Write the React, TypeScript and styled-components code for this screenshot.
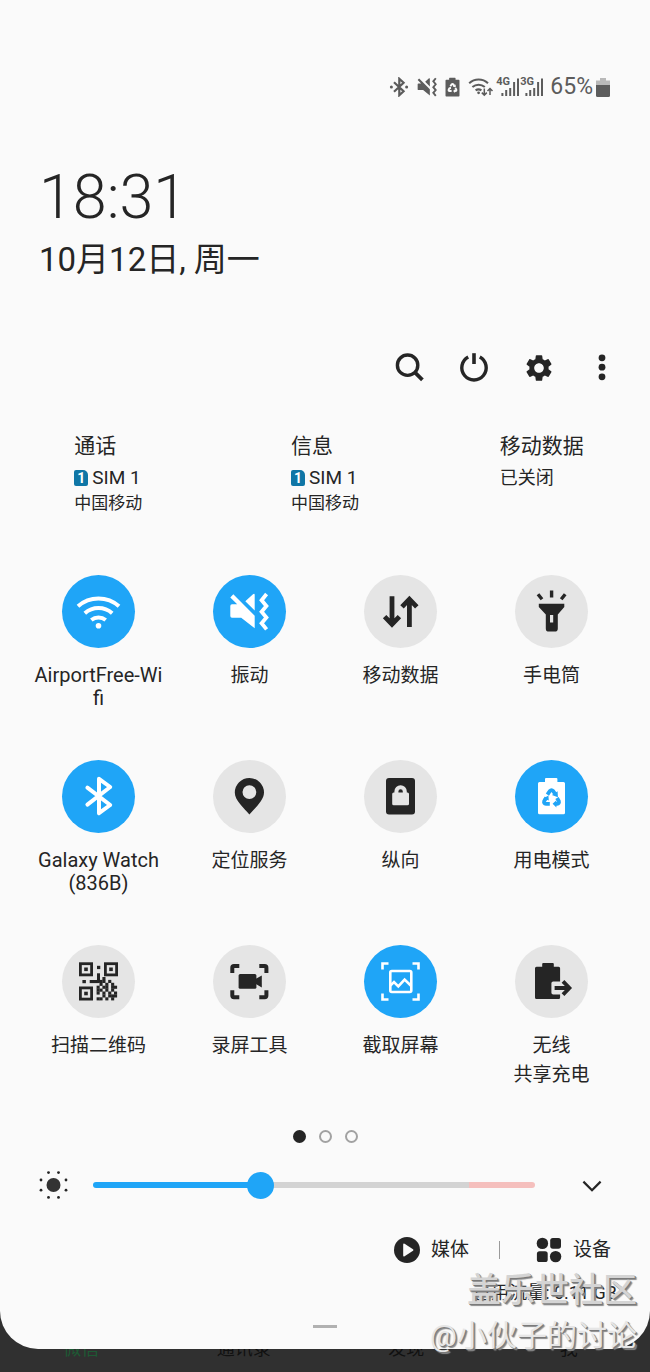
import React, { useState } from "react";
import styled, { createGlobalStyle } from "styled-components";
import { MdSettings } from "react-icons/md";

const ink = "#252525";
const blue = "#1fa5f7";
const grey = "#e5e5e5";
const paper = "#fafafa";
const statusInk = "#5c5c5c";

const GlobalStyle = createGlobalStyle`
  *, *::before, *::after { box-sizing: border-box; }
  body {
    margin: 0;
    background: #303030;
    color: ${ink};
    font-family: Roboto, "Noto Sans CJK SC", sans-serif;
  }
  button { font: inherit; color: inherit; background: none; border: 0; padding: 0; cursor: pointer; }
  svg { display: block; flex: none; }
`;

const Screen = styled.div`
  position: relative;
  overflow: hidden;
  min-height: 100vh;
`;

const Panel = styled.main`
  position: relative;
  z-index: 1;
  background: ${paper};
  border-radius: 0 0 38px 38px;
  padding-top: 72px;
`;

const StatusBar = styled.header`
  display: flex;
  justify-content: flex-end;
  align-items: center;
  gap: 8px;
  height: 30px;
  padding: 0 40px;
  color: ${statusInk};
`;

const SignalPair = styled.div`
  display: flex;
  gap: 1px;
  margin-left: -5px;
`;

const SignalBox = styled.div`
  position: relative;
  width: 23px;
  height: 20px;
`;

const SignalLabel = styled.span`
  position: absolute;
  left: -1px;
  top: -1px;
  font-size: 11px;
  line-height: 12px;
  font-weight: 700;
`;

const Charge = styled.div`
  display: flex;
  align-items: center;
  gap: 3px;
  font-size: 23px;
  line-height: 30px;
  margin-left: -2px;
`;

const ClockBlock = styled.section`
  padding: 57px 39px 0;
`;

const Clock = styled.div`
  font-size: 61px;
  line-height: 76px;
  font-weight: 300;
`;

const DateLine = styled.div`
  font-size: 33px;
  line-height: 50px;
`;

const Toolbar = styled.div`
  display: flex;
  justify-content: flex-end;
  gap: 34px;
  padding: 67px 33px 0;
`;

const ToolButton = styled.button`
  display: grid;
  place-items: center;
  width: 30px;
  height: 30px;
`;

const SimRow = styled.section`
  display: grid;
  grid-template-columns: repeat(3, 1fr);
  justify-items: center;
  padding-top: 48px;
  height: 193px;
`;

const SimTitle = styled.h2`
  margin: 0;
  font-size: 21px;
  line-height: 32px;
  font-weight: 400;
`;

const SimName = styled.div<{ $latin?: boolean }>`
  display: flex;
  align-items: center;
  gap: 4px;
  font-size: ${(p) => (p.$latin ? 19 : 18)}px;
  line-height: 32px;
`;

const SimBadge = styled.span`
  width: 14px;
  height: 16px;
  border-radius: 2px 5px 2px 2px;
  background: #0f76a6;
  color: #fff;
  font-size: 14px;
  line-height: 16px;
  font-weight: 700;
  text-align: center;
`;

const SimCarrier = styled.div`
  font-size: 17px;
  line-height: 18px;
`;

const Tiles = styled.section`
  display: grid;
  grid-template-columns: repeat(4, 1fr);
  grid-auto-rows: minmax(185px, auto);
  padding: 0 23px;
`;

const TileButton = styled.button`
  display: flex;
  flex-direction: column;
  align-items: center;
  gap: 13px;
`;

const Disc = styled.span<{ $on: boolean }>`
  display: block;
  width: 73px;
  height: 73px;
  border-radius: 50%;
  background: ${(p) => (p.$on ? blue : grey)};
  color: ${(p) => (p.$on ? "#fff" : ink)};
`;

const TileLabel = styled.span<{ $latin: boolean }>`
  font-size: ${(p) => (p.$latin ? 20 : 19)}px;
  line-height: ${(p) => (p.$latin ? 23 : 29)}px;
  white-space: pre-line;
  padding-top: ${(p) => (p.$latin ? 3 : 0)}px;
`;

const Pager = styled.nav`
  display: flex;
  justify-content: center;
  gap: 13px;
`;

const PageDot = styled.button<{ $current: boolean }>`
  width: 13px;
  height: 13px;
  border-radius: 50%;
  border: 2px solid ${(p) => (p.$current ? ink : "#a2a2a2")};
  background: ${(p) => (p.$current ? ink : "transparent")};
`;

const BrightnessRow = styled.div`
  display: flex;
  align-items: center;
  padding: 0 43px 0 38px;
  margin-top: 27px;
`;

const Slider = styled.input`
  flex: 1;
  min-width: 0;
  height: 30px;
  margin: 0 42px 0 24px;
  appearance: none;
  background: transparent;

  &::-webkit-slider-runnable-track {
    height: 6px;
    border-radius: 3px;
    background: linear-gradient(
      to right,
      ${blue} var(--level),
      #d3d3d3 var(--level),
      #d3d3d3 85%,
      #f5bfbd 85%
    );
  }
  &::-webkit-slider-thumb {
    appearance: none;
    width: 27px;
    height: 27px;
    margin-top: -10px;
    border-radius: 50%;
    background: ${blue};
  }
`;

const Footer = styled.div`
  display: flex;
  align-items: center;
  justify-content: flex-end;
  padding: 0 39px;
  margin-top: 35px;
  font-size: 19px;
  line-height: 30px;
`;

const FooterButton = styled.button`
  display: flex;
  align-items: center;
  gap: 11px;
`;

const Divider = styled.span`
  width: 1px;
  height: 18px;
  margin: 0 36px 0 30px;
  background: #9a9a9a;
`;

const Usage = styled.div`
  padding: 15px 33px 0;
  text-align: right;
  font-size: 18px;
  line-height: 26px;
`;

const Handle = styled.div`
  width: 24px;
  height: 3px;
  margin: 19px auto 0;
  background: #b1b1b1;
`;

const PanelEnd = styled.div`
  height: 21px;
`;

const TabBar = styled.nav`
  display: grid;
  grid-template-columns: repeat(4, 1fr);
  margin-top: -13px;
  padding-bottom: 10px;
  font-size: 18px;
  line-height: 26px;
  text-align: center;
`;

const Tab = styled.a<{ $active: boolean }>`
  color: ${(p) => (p.$active ? "#1d5a34" : "#111")};
  text-decoration: none;
`;

const Watermark = styled.div`
  position: absolute;
  z-index: 2;
  right: 13px;
  bottom: 14px;
  text-align: right;
  color: #d4d4d4;
  text-shadow: 1px 1px 0 #7a7a7a, 2px 2px 1px #8a8a8a;
  pointer-events: none;
`;

const WatermarkTitle = styled.div`
  font-size: 34px;
  line-height: 48px;
  font-weight: 500;
`;

const WatermarkUser = styled.div`
  font-size: 30px;
  line-height: 44px;
  color: #e6e6e6;
`;

type IconProps = { children: React.ReactNode; box?: string; w?: number; h?: number };

const Icon = ({ children, box = "0 0 73 73", w = 73, h = 73 }: IconProps) => (
  <svg width={w} height={h} viewBox={box} fill="none" stroke="none" aria-hidden="true">
    {children}
  </svg>
);

const WifiShape = () => (
  <>
    <g stroke="currentColor" strokeWidth="4">
      <path d="M16 31.3A31 31 0 0 1 57 31.3" />
      <path d="M22.8 38.2A21 21 0 0 1 50.2 38.2" />
      <path d="M29.3 45A11.5 11.5 0 0 1 43.7 45" />
    </g>
    <circle cx="36.5" cy="50.8" r="2.8" fill="currentColor" />
  </>
);

const VibrateShape = () => (
  <>
    <path
      fill="currentColor"
      d="M17.3 31Q17.3 29.3 19 29.3H24.2L17.3 22.4 20.3 19.3 41.7 40.8V53.3L28.2 42.7H19Q17.3 42.7 17.3 41ZM32.3 26.2 40 19.2Q41.7 18 41.7 20V35.4Z"
    />
    <path
      stroke="currentColor"
      strokeWidth="3.8"
      d="M53.6 19 48.6 25.2 53.4 31 48.6 36.8 53.4 42.6 48.6 48.2 53.6 54.4"
    />
  </>
);

const DataShape = () => (
  <path
    stroke="currentColor"
    strokeWidth="4.8"
    d="M28 21.3V49M20.6 41.6 28 49.2 35.4 41.6M45.4 52V24.2M38 31.9 45.4 24.2 52.8 31.9"
  />
);

const TorchShape = () => (
  <>
    <path
      fill="currentColor"
      fillRule="evenodd"
      d="M23.8 28.7H49.3V32L42.8 39.5V53.4Q42.8 56.6 39.6 56.6H34Q30.8 56.6 30.8 53.4V39.5L23.8 32ZM35 40V47.6H38.2V40Z"
    />
    <path stroke="currentColor" strokeWidth="3.4" d="M36.6 15.6V22.4M23 19.3 27 24.3M50.2 19.3 46.2 24.3" />
  </>
);

const BluetoothShape = () => (
  <path
    stroke="currentColor"
    strokeWidth="4"
    strokeLinecap="round"
    strokeLinejoin="round"
    d="M25.4 27.6 48.2 45 37 53.2V18.8L48.2 27 25.4 44.6"
  />
);

const PinShape = () => (
  <path
    fill="currentColor"
    fillRule="evenodd"
    d="M36.4 54.5C31 48 21.8 40.5 21.8 32.5A14.6 14.6 0 0 1 51 32.5C51 40.5 41.8 48 36.4 54.5ZM36.4 25.2A6.9 6.9 0 1 0 36.4 39 6.9 6.9 0 1 0 36.4 25.2Z"
  />
);

const PortraitShape = () => (
  <>
    <rect x="22" y="18" width="29" height="36.4" rx="3" fill="currentColor" />
    <rect x="28.2" y="32.4" width="16.8" height="12.8" rx="1.5" fill={grey} />
    <path stroke={grey} strokeWidth="4" d="M32.4 34V31.4A4.2 4.2 0 0 1 40.8 31.4V34" />
  </>
);

const PowerModeShape = ({ cut }: { cut: string }) => (
  <>
    <path
      fill="currentColor"
      d="M30 22V19Q30 18 31 18H41.4Q42.4 18 42.4 19V22H48.5Q50 22 50 23.5V52.8Q50 54.3 48.5 54.3H24.5Q23 54.3 23 52.8V23.5Q23 22 24.5 22Z"
    />
    <path
      stroke={cut}
      strokeWidth="3.8"
      d="M32.4 34.6 34.9 31Q36.5 29.2 38.1 31L40 33.8M31.4 37.6 29.2 41Q28.4 43.6 31 43.8H34.8M42 38 43.8 41Q44.6 43.6 42 43.8H40.5"
    />
    <path fill={cut} d="M36.9 34.9 42.6 31.2 42.9 37.2ZM28.2 38.4 33.4 35.4 33.8 40.4ZM41.4 40.2V47.4L37.6 43.8Z" />
  </>
);

const qrRows = [
  "..#....",
  "###.#..",
  ".#.#.#.",
  "#.##.##",
  "##.#.#.",
  "#.#.#.#",
  "..#.###",
  "##.#.#.",
];

const QrShape = () => (
  <g fill="currentColor">
    {[
      [17, 17.3],
      [42, 17.3],
      [17, 41.5],
    ].map(([x, y]) => (
      <g key={`${x}-${y}`}>
        <rect x={x + 1.4} y={y + 1.4} width="11.2" height="11.2" fill="none" stroke="currentColor" strokeWidth="2.8" />
        <rect x={x + 5.2} y={y + 5.2} width="3.6" height="3.6" />
      </g>
    ))}
    <rect x="35" y="20.8" width="3.3" height="3.3" />
    <rect x="35" y="28.3" width="3" height="9" />
    <rect x="20.4" y="35" width="3.5" height="3.2" />
    <rect x="27.7" y="35" width="9" height="3.1" />
    {qrRows.flatMap((row, r) =>
      [...row].map((c, i) =>
        c === "#" ? <rect key={`${r}-${i}`} x={34.6 + i * 2.9} y={32 + r * 2.9} width="3.1" height="3.1" /> : null
      )
    )}
  </g>
);

const RecordShape = () => (
  <>
    <path
      stroke="currentColor"
      strokeWidth="4"
      d="M26.3 21H21Q19.3 21 19.3 22.7V28M46.3 21H51.7Q53.4 21 53.4 22.7V28M26.3 52.2H21Q19.3 52.2 19.3 50.5V45.2M46.3 52.2H51.7Q53.4 52.2 53.4 50.5V45.2"
    />
    <rect x="25.6" y="29" width="17.8" height="14.8" rx="1.5" fill="currentColor" />
    <path fill="currentColor" d="M42 34.3 48.8 30.6V42.4L42 38.6Z" />
  </>
);

const CaptureShape = () => (
  <g stroke="currentColor" strokeWidth="2.6">
    <path d="M24.5 18.5H18.5V24.5M48.5 18.5H54.5V24.5M24.5 54.5H18.5V48.5M48.5 54.5H54.5V48.5" />
    <rect x="26.3" y="26" width="21" height="21" rx="1.5" />
    <path d="M26.3 40.6 30 37 34.3 41.4 40.6 34.6 47.3 41" />
  </g>
);

const ShareShape = () => (
  <>
    <path
      fill="currentColor"
      d="M27.2 21.8V19Q27.2 18 28.2 18H37.8Q38.8 18 38.8 19V21.8H43.6Q45.1 21.8 45.1 23.3V36.4H38.2Q36.4 36.4 36.4 38.2V47.8Q36.4 49.6 38.2 49.6H45.1V52.6Q45.1 54.1 43.6 54.1H21.5Q20 54.1 20 52.6V23.3Q20 21.8 21.5 21.8Z"
    />
    <path stroke="currentColor" strokeWidth="3.8" d="M39.6 43H54.2M48 36.4 54.4 43 48 49.6" />
  </>
);

const tiles: { label: string; on?: boolean; latin?: boolean; shape: React.ReactNode }[] = [
  { label: "AirportFree-Wi\nfi", on: true, latin: true, shape: <WifiShape /> },
  { label: "振动", on: true, shape: <VibrateShape /> },
  { label: "移动数据", shape: <DataShape /> },
  { label: "手电筒", shape: <TorchShape /> },
  { label: "Galaxy Watch\n(836B)", on: true, latin: true, shape: <BluetoothShape /> },
  { label: "定位服务", shape: <PinShape /> },
  { label: "纵向", shape: <PortraitShape /> },
  { label: "用电模式", on: true, shape: <PowerModeShape cut={blue} /> },
  { label: "扫描二维码", shape: <QrShape /> },
  { label: "录屏工具", shape: <RecordShape /> },
  { label: "截取屏幕", on: true, shape: <CaptureShape /> },
  { label: "无线\n共享充电", shape: <ShareShape /> },
];

const Signal = ({ label }: { label: string }) => (
  <SignalBox>
    <SignalLabel>{label}</SignalLabel>
    <Icon box="0 0 23 20" w={23} h={20}>
      <path stroke="currentColor" strokeWidth="2" d="M5.4 19V16M9.2 19V13M13.2 19V11M17.1 19V5M21 19V1.5" />
    </Icon>
  </SignalBox>
);

const Status = () => (
  <StatusBar>
    <Icon box="0 0 20 20" w={20} h={20}>
      <path stroke="currentColor" strokeWidth="2.2" d="M5 5.2 14.6 14.2 10.3 18.2V1.8L14.6 5.8 5 14.8" />
      <circle cx="2.4" cy="10" r="1.5" fill="currentColor" />
      <circle cx="17.6" cy="10" r="1.5" fill="currentColor" />
    </Icon>
    <Icon box="16 17 40 39" w={20} h={20}>
      <VibrateShape />
    </Icon>
    <Icon box="22 17 29 38" w={15} h={20}>
      <PowerModeShape cut={paper} />
    </Icon>
    <Icon box="0 0 26 20" w={26} h={20}>
      <g stroke="currentColor" strokeWidth="2.1">
        <path d="M1.2 6.2A14 14 0 0 1 20 6.2" />
        <path d="M4.4 10A9.5 9.5 0 0 1 16.8 10" />
        <path d="M7.6 13.4A5 5 0 0 1 13.4 13.4" />
        <path strokeWidth="1.5" d="M16.3 11.5V18M13.8 15.6 16.3 18.1 18.8 15.6M22 18V11.6M19.5 14 22 11.5 24.5 14" />
      </g>
      <circle cx="10.6" cy="15.8" r="1.4" fill="currentColor" />
    </Icon>
    <SignalPair>
      <Signal label="4G" />
      <Signal label="3G" />
    </SignalPair>
    <Charge>
      65%
      <Icon box="0 0 14 20" w={14} h={20}>
        <path fill="#b9b9b9" d="M4 1H10V3.5H14V8H0V3.5H4Z" />
        <path fill="currentColor" d="M0 8H14V18.5Q14 20 12.5 20H1.5Q0 20 0 18.5Z" />
      </Icon>
    </Charge>
  </StatusBar>
);

const SunIcon = () => (
  <Icon box="0 0 31 30" w={31} h={30}>
    <circle cx="15.5" cy="15" r="7" fill="#333" />
    <g fill={ink}>
      {[
        [10.5, 2.6],
        [20.5, 2.6],
        [3, 10],
        [28, 10],
        [3, 20.2],
        [28, 20.2],
        [10.5, 27.4],
        [20.5, 27.4],
      ].map(([cx, cy]) => (
        <circle key={`${cx}-${cy}`} cx={cx} cy={cy} r="1.4" />
      ))}
    </g>
  </Icon>
);

export default function App() {
  const [level, setLevel] = useState(37);
  const [page, setPage] = useState(0);

  return (
    <>
      <GlobalStyle />
      <Screen>
        <Panel>
          <Status />
          <ClockBlock>
            <Clock>18:31</Clock>
            <DateLine>10月12日, 周一</DateLine>
          </ClockBlock>

          <Toolbar>
            <ToolButton aria-label="搜索">
              <Icon box="0 0 30 30" w={30} h={30}>
                <circle cx="12.6" cy="13.2" r="10.2" stroke="currentColor" strokeWidth="3.4" />
                <path d="M19.6 20.2 27.4 27.8" stroke="currentColor" strokeWidth="3.8" />
              </Icon>
            </ToolButton>
            <ToolButton aria-label="电源">
              <Icon box="0 0 30 30" w={30} h={30}>
                <path d="M9.2 5A12.2 12.2 0 1 0 20.8 5" stroke="currentColor" strokeWidth="3.4" />
                <path d="M15 1.2V12" stroke="currentColor" strokeWidth="3.6" />
              </Icon>
            </ToolButton>
            <ToolButton aria-label="设置">
              <MdSettings size={32} />
            </ToolButton>
            <ToolButton aria-label="更多">
              <Icon box="0 0 30 30" w={30} h={30}>
                <g fill="currentColor">
                  <circle cx="15" cy="5.8" r="3.4" />
                  <circle cx="15" cy="15.2" r="3.4" />
                  <circle cx="15" cy="24.8" r="3.4" />
                </g>
              </Icon>
            </ToolButton>
          </Toolbar>

          <SimRow>
            {["通话", "信息"].map((title) => (
              <div key={title}>
                <SimTitle>{title}</SimTitle>
                <SimName $latin>
                  <SimBadge>1</SimBadge>
                  SIM 1
                </SimName>
                <SimCarrier>中国移动</SimCarrier>
              </div>
            ))}
            <div>
              <SimTitle>移动数据</SimTitle>
              <SimName>已关闭</SimName>
            </div>
          </SimRow>

          <Tiles>
            {tiles.map((t) => (
              <TileButton key={t.label} aria-pressed={!!t.on}>
                <Disc $on={!!t.on}>
                  <Icon>{t.shape}</Icon>
                </Disc>
                <TileLabel $latin={!!t.latin}>{t.label}</TileLabel>
              </TileButton>
            ))}
          </Tiles>

          <Pager>
            {[0, 1, 2].map((i) => (
              <PageDot key={i} $current={i === page} aria-label={`第${i + 1}页`} onClick={() => setPage(i)} />
            ))}
          </Pager>

          <BrightnessRow>
            <SunIcon />
            <Slider
              type="range"
              min={0}
              max={100}
              value={level}
              aria-label="亮度"
              onChange={(e) => setLevel(Number(e.target.value))}
              style={{ "--level": `${level}%` } as React.CSSProperties}
            />
            <ToolButton aria-label="展开">
              <Icon box="0 0 30 30" w={30} h={30}>
                <path d="M6.4 11.6 15 20.2 23.6 11.6" stroke="currentColor" strokeWidth="2.2" />
              </Icon>
            </ToolButton>
          </BrightnessRow>

          <Footer>
            <FooterButton>
              <Icon box="0 0 26 26" w={26} h={26}>
                <circle cx="13" cy="13" r="13" fill={ink} />
                <path d="M9.2 7.6Q9.2 6 10.6 6.8L19 12.2Q20 13 19 13.8L10.6 19.2Q9.2 20 9.2 18.4Z" fill={paper} />
              </Icon>
              媒体
            </FooterButton>
            <Divider />
            <FooterButton>
              <Icon box="0 0 26 26" w={26} h={26}>
                <g fill={ink}>
                  <circle cx="6.4" cy="6.4" r="5.7" />
                  <rect x="14.2" y="0.9" width="10.8" height="10.8" rx="2.6" />
                  <rect x="0.9" y="14.2" width="10.8" height="10.8" rx="2.6" />
                  <circle cx="19.6" cy="19.6" r="5.7" />
                </g>
              </Icon>
              设备
            </FooterButton>
          </Footer>

          <Usage>已用流量: 0.11 GB</Usage>
          <Handle />
          <PanelEnd />
        </Panel>

        <TabBar>
          {["微信", "通讯录", "发现", "我"].map((name, i) => (
            <Tab key={name} href="#" $active={i === 0}>
              {name}
            </Tab>
          ))}
        </TabBar>

        <Watermark>
          <WatermarkTitle>盖乐世社区</WatermarkTitle>
          <WatermarkUser>@小伙子的讨论</WatermarkUser>
        </Watermark>
      </Screen>
    </>
  );
}
